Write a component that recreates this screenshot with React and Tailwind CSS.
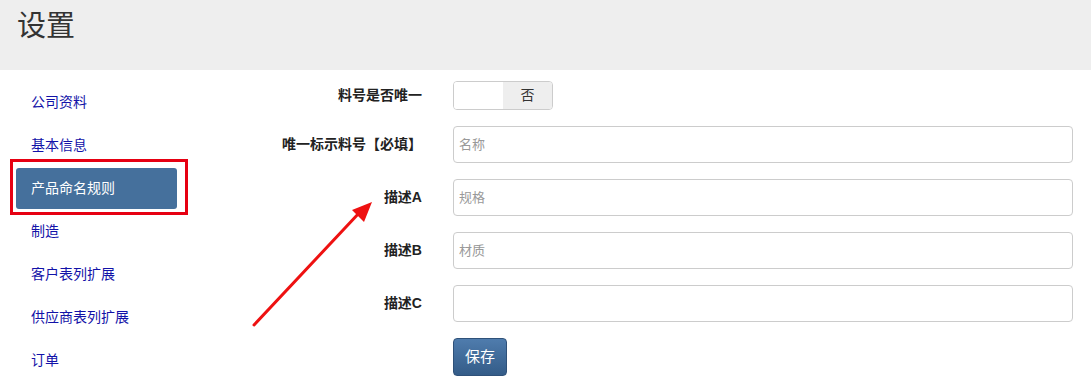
import React from 'react';

const cjk = { fontFamily: '"Liberation Sans", "Noto Sans CJK SC", sans-serif' };

const navItems = ['公司资料', '基本信息', '产品命名规则', '制造', '客户表列扩展', '供应商表列扩展', '订单'];

const fields = [
  { label: '唯一标示料号【必填】', placeholder: '名称' },
  { label: '描述A', placeholder: '规格' },
  { label: '描述B', placeholder: '材质' },
  { label: '描述C', placeholder: '' },
];

const Label = ({ children }) => (
  <label className="w-[182px] shrink-0 text-right text-[14px] font-bold text-[#222]">{children}</label>
);

export default function App() {
  return (
    <div className="relative w-[1091px] h-[385px] overflow-hidden bg-white" style={cjk}>
      <div className="h-[70px] bg-[#eeeeee] pl-[17px] pt-[6px]">
        <h1 className="text-[29px] leading-[40px] text-[#333]">设置</h1>
      </div>

      <div className="flex">
        {/* sidebar */}
        <ul className="w-[240px] shrink-0 pl-[16px] pt-[12px]">
          {navItems.map((item, i) => (
            <li
              key={item}
              className={`w-[161px] h-[41px] mb-[2px] px-[15px] flex items-center text-[14px] rounded-[3px] ${
                i === 2 ? 'bg-[#45709c] text-white' : 'text-[#1212a8]'
              }`}
            >
              {item}
            </li>
          ))}
        </ul>

        {/* form */}
        <div className="flex-1 pt-[11px] pr-[18px] flex flex-col gap-4">
          <div className="flex items-center gap-[31px]">
            <Label>料号是否唯一</Label>
            <div className="flex w-[100px] h-[29px] border border-[#ccc] rounded-[4px] overflow-hidden">
              <div className="flex-1 bg-white"></div>
              <div className="flex-1 bg-[#eeeeee] flex items-center justify-center text-[14px] text-[#333]">否</div>
            </div>
          </div>

          {fields.map((f) => (
            <div key={f.label} className="flex items-center gap-[31px]">
              <Label>{f.label}</Label>
              <input
                className="flex-1 h-[37px] border border-[#ccc] rounded-[4px] px-[5px] text-[13px] placeholder:text-[#999] outline-none"
                placeholder={f.placeholder}
                style={cjk}
              />
            </div>
          ))}

          <div className="flex gap-[31px]">
            <div className="w-[182px] shrink-0"></div>
            <button className="w-[54px] h-[38px] rounded-[4px] border border-[#2f5179] bg-gradient-to-b from-[#4f7cad] to-[#345c88] text-white text-[15px]">
              保存
            </button>
          </div>
        </div>
      </div>

      {/* annotations */}
      <div className="absolute left-[10px] top-[159px] w-[178px] h-[56px] border-[3px] border-[#e60012]"></div>
      <svg className="absolute left-0 top-0 pointer-events-none" width="1091" height="385">
        <line x1="254" y1="325" x2="360" y2="212" stroke="#ee1111" strokeWidth="3" strokeLinecap="round" />
        <polygon points="372,202 352,210 364,222" fill="#ee1111" />
      </svg>
    </div>
  );
}
